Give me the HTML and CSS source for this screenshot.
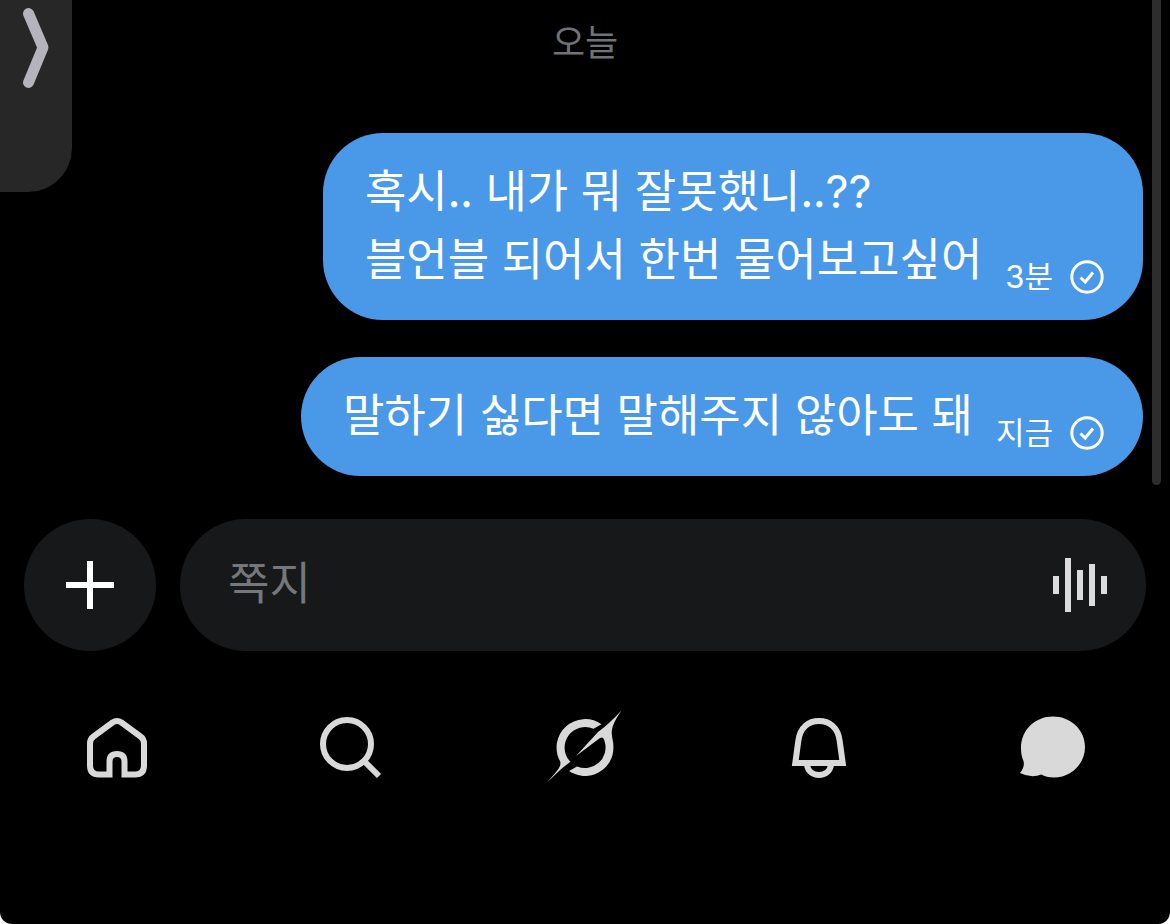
FILE: index.html
```html
<!DOCTYPE html>
<html lang="ko">
<head>
<meta charset="UTF-8">
<meta name="viewport" content="width=device-width, initial-scale=1.0">
<title>쪽지</title>
<link rel="stylesheet" href="styles.css">
</head>

<body>
<div class="app">

  <button class="edge-handle" type="button" aria-label="열기">
    <svg width="72" height="96" viewBox="0 0 72 96" fill="none" stroke="#b5b4bc" stroke-width="11" stroke-linecap="round" stroke-linejoin="round">
      <path d="M28.500 13.500L43 47.500L28.500 82.500"/>
    </svg>
  </button>

  <main class="thread">
    <p class="date">오늘</p>

    <div class="message">
      <p class="message-text">혹시.. 내가 뭐 잘못했니..<span class="latin">??</span><br>블언블 되어서 한번 물어보고싶어</p>
      <div class="message-meta">
        <span>3분</span>
        <svg class="check" viewBox="0 0 34 34" fill="none" stroke="#fff">
          <circle cx="17" cy="17" r="15.200" stroke-width="3"/>
          <path d="M10.500 17.500L15.200 22L23 12.500" stroke-width="3"/>
        </svg>
      </div>
    </div>

    <div class="message">
      <p class="message-text">말하기 싫다면 말해주지 않아도 돼</p>
      <div class="message-meta">
        <span>지금</span>
        <svg class="check" viewBox="0 0 34 34" fill="none" stroke="#fff">
          <circle cx="17" cy="17" r="15.200" stroke-width="3"/>
          <path d="M10.500 17.500L15.200 22L23 12.500" stroke-width="3"/>
        </svg>
      </div>
    </div>

    <div class="scrollbar"></div>
  </main>

  <form class="composer">
    <button class="add-button" type="button" aria-label="추가">
      <svg width="48" height="48" viewBox="0 0 48 48" fill="#fff">
        <path d="M21 0h6v21h21v6H27v21h-6V27H0v-6h21z"/>
      </svg>
    </button>
    <div class="composer-field">
      <input class="composer-input" type="text" placeholder="쪽지" aria-label="쪽지">
      <button class="voice-button" type="button" aria-label="음성 쪽지">
        <svg width="56" height="56" viewBox="0 0 56 56" fill="#dcdcdd">
          <path d="M1 19h6v18H1zM13 1h6v54h-6zM25 13h6v30h-6zM37 7h6v42h-6zM49 19h6v18h-6z"/>
        </svg>
      </button>
    </div>
  </form>

  <nav class="tab-bar">
    <a class="tab" href="#home" aria-label="홈">
      <svg viewBox="0 0 76 76" fill="none" stroke="#d9d9d9" stroke-width="6">
        <path d="M30.500 65.500H20Q11 65.500 11 56.500V34.500Q11 30 14.500 27.500L33.500 13.500Q38 10.500 42.500 13.500L61.500 27.500Q65 30 65 34.500V56.500Q65 65.500 56 65.500H45.500V52.500Q45.500 45 38 45Q30.500 45 30.500 52.500V68.500M45.500 65.500V68.500"/>
      </svg>
    </a>
    <a class="tab" href="#search" aria-label="검색">
      <svg viewBox="0 0 76 76" fill="none" stroke="#d9d9d9" stroke-width="6">
        <circle cx="34" cy="35" r="24"/>
        <path d="M51 52L66 67"/>
      </svg>
    </a>
    <a class="tab" href="#grok" aria-label="Grok">
      <svg viewBox="0 0 76 76" fill="#d9d9d9">
        <path d="M0 73.500Q11.500 60.500 12.500 58Q13.800 55.500 13.300 52.700A28.500 28.500 0 0 1 54.500 15.300L46.500 19.800A20.500 20.500 0 0 0 22.500 51.800L23.500 52.800Q15 59 11 63Z"/>
        <path d="M74.500 1.500Q65 15 64.800 22Q64.500 24.500 65.300 29Q67.500 38 65.500 46A28.500 28.500 0 0 1 22 62L30 57.400A20.500 20.500 0 0 0 57.700 32.700Q56.500 27 53 29L29 47L51 23Q62 15 74.500 1.500Z"/>
      </svg>
    </a>
    <a class="tab" href="#alerts" aria-label="알림">
      <svg viewBox="0 0 76 76" fill="none" stroke="#d9d9d9" stroke-width="6">
        <path d="M14.300 54L17.300 32C19 18 28 12 38 12S57 18 58.700 32L61.700 54Z"/>
        <path d="M26 56C27 62 31.500 66 38 66S49 62 50 56"/>
      </svg>
    </a>
    <a class="tab" href="#messages" aria-label="쪽지">
      <svg viewBox="0 0 76 76" fill="#d9d9d9">
        <path d="M38 7.500C56 7.500 70 21 70 38S56 68.500 39 68.500Q31 68.500 26.500 65.500Q16 69.500 5 64Q10 58 8.500 52Q6 47 6 39C6 21 20 7.500 38 7.500Z"/>
      </svg>
    </a>
  </nav>

</div>
</body>
</html>
```
FILE: styles.css
```css
* {
  box-sizing: border-box;
}

html {
  background: #fff;
}

body {
  margin: 0;
  font-family: "Noto Sans CJK KR", sans-serif;
  color: #fff;
}

p {
  margin: 0;
}

button {
  border: none;
  padding: 0;
  cursor: pointer;
}

svg {
  display: block;
}

.app {
  position: relative;
  display: flex;
  flex-direction: column;
  min-height: 100vh;
  background: #000;
  border-radius: 0 0 12px 12px;
  overflow: hidden;
}

/* Pull-out handle that floats over the thread */
.edge-handle {
  position: absolute;
  top: 0;
  left: 0;
  z-index: 2;
  width: 72px;
  height: 192px;
  display: flex;
  align-items: flex-start;
  background: #272727;
  border-radius: 0 0 44px 0;
}

/* Thread */
.thread {
  position: relative;
  flex: 1;
  display: flex;
  flex-direction: column;
  align-items: flex-end;
  gap: 37px;
  padding: 14px 27px 42px;
}

.date {
  align-self: center;
  margin-bottom: 30px;
  font-size: 36px;
  line-height: 52px;
  color: #707277;
}

.message {
  display: flex;
  align-items: flex-end;
  gap: 23px;
  padding: 22px 39px 25px 42px;
  background: #4a99e9;
  border-radius: 60px;
}

.message-text {
  padding-bottom: 4px;
  font-size: 45px;
  line-height: 68px;
}

.latin {
  font-family: Inter, sans-serif;
  line-height: 1;
}

.message-meta {
  display: flex;
  align-items: center;
  gap: 17px;
  font-family: Inter, "Noto Sans CJK KR", sans-serif;
  font-size: 31px;
  line-height: 36px;
  white-space: nowrap;
}

.check {
  width: 34px;
  height: 34px;
}

.scrollbar {
  position: absolute;
  top: 0;
  right: 9px;
  bottom: 34px;
  width: 9px;
  background: #2d2d2d;
  border-radius: 0 0 5px 5px;
}

/* Composer */
.composer {
  display: flex;
  gap: 24px;
  padding: 0 24px;
}

.add-button {
  flex: none;
  width: 132px;
  height: 132px;
  display: flex;
  align-items: center;
  justify-content: center;
  background: #16181a;
  border-radius: 50%;
}

.composer-field {
  flex: 1;
  display: flex;
  align-items: center;
  padding: 0 38px 0 48px;
  background: #16181a;
  border-radius: 66px;
}

.composer-input {
  flex: 1;
  min-width: 0;
  padding: 0 0 8px;
  border: none;
  outline: none;
  background: none;
  color: #fff;
  font-family: inherit;
  font-size: 45px;
  line-height: 68px;
}

.composer-input::placeholder {
  color: #75777d;
  opacity: 1;
}

.voice-button {
  background: none;
}

/* Bottom tabs */
.tab-bar {
  display: grid;
  grid-template-columns: repeat(5, 1fr);
  padding: 58px 0 139px;
}

.tab {
  display: flex;
  justify-content: center;
}

.tab svg {
  width: 76px;
  height: 76px;
}
```
